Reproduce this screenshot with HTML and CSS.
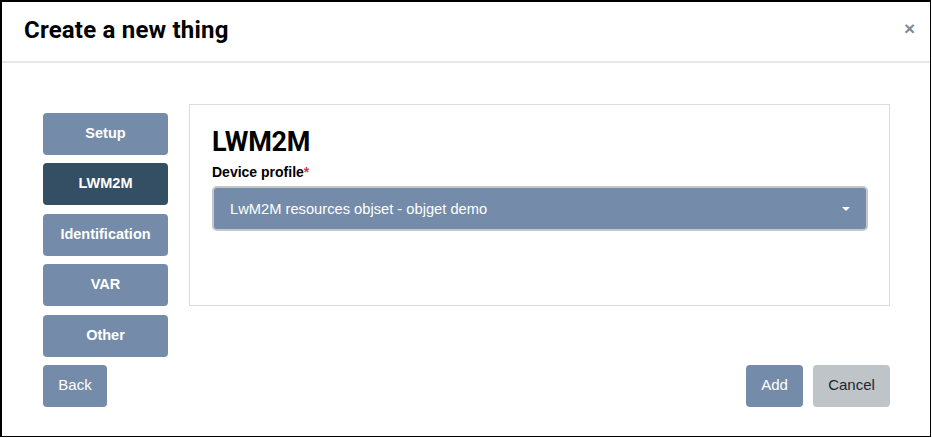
FILE: index.html
```html
<!DOCTYPE html>
<html>
<head>
<meta charset="utf-8">
<link rel="stylesheet" href="styles.css">
</head>
<body>
<div class="modal">
  <div class="modal-header">
    <h1 class="modal-title">Create a new thing</h1>
    <span class="close">&times;</span>
  </div>
  <div class="modal-body">
    <div class="steps">
      <button class="step">Setup</button>
      <button class="step active">LWM2M</button>
      <button class="step">Identification</button>
      <button class="step">VAR</button>
      <button class="step">Other</button>
      <button class="btn btn-primary back">Back</button>
    </div>
    <div class="main">
      <div class="panel">
        <h2 class="panel-title">LWM2M</h2>
        <label class="field-label">Device profile<span class="req">*</span></label>
        <div class="select">
          <span class="select-text">LwM2M resources objset - objget demo</span>
          <span class="caret"></span>
        </div>
      </div>
      <div class="actions">
        <button class="btn btn-primary">Add</button>
        <button class="btn btn-secondary">Cancel</button>
      </div>
    </div>
  </div>
</div>
</body>
</html>
```
FILE: styles.css
```css
* { box-sizing: border-box; }
html, body { margin: 0; padding: 0; background: #fff; }
body { font-family: "Liberation Sans", Arial, sans-serif; }

.modal {
  width: 931px;
  height: 437px;
  border-style: solid;
  border-color: #000;
  border-width: 2px 1px 1px 2px;
  display: flex;
  flex-direction: column;
}

.modal-header {
  height: 61px;
  border-bottom: 2px solid #e4e8ec;
  display: flex;
  align-items: center;
  justify-content: space-between;
  padding: 0 15px 0 22px;
}
.modal-title {
  margin: -4px 0 0 0;
  font-family: Roboto, sans-serif;
  font-weight: 700;
  font-size: 24px;
  letter-spacing: 0.2px;
  color: #000;
}
.close {
  font-family: "Liberation Sans", Arial, sans-serif;
  font-size: 19px;
  font-weight: 700;
  color: #7d8a98;
  line-height: 1;
  margin-top: -7px;
}

.modal-body {
  display: grid;
  grid-template-columns: 125px 701px;
  column-gap: 21px;
  padding: 41px 0 0 41px;
}

.steps {
  display: flex;
  flex-direction: column;
  gap: 8.4px;
  padding-top: 9px;
}
.step {
  height: 42px;
  border: none;
  border-radius: 4px;
  background: #748ca9;
  color: #fff;
  font-family: "Liberation Sans", Arial, sans-serif;
  font-weight: 700;
  font-size: 14.5px;
  padding: 0 0 2px 0;
}
.step.active { background: #344f64; }

.btn {
  height: 42px;
  border: none;
  border-radius: 4px;
  font-family: "Liberation Sans", Arial, sans-serif;
  font-size: 15px;
  padding: 0 12px 2px;
}
.btn-primary { background: #748ca9; color: #fff; }
.btn-secondary { background: #bfc4c8; color: #1c2430; }
.back { width: 64px; align-self: flex-start; }

.main {
  display: flex;
  flex-direction: column;
  justify-content: space-between;
}

.panel {
  height: 202px;
  border: 1px solid #dcdcdc;
  padding: 20px 21px 0 22px;
}
.panel-title {
  margin: 0;
  font-family: Roboto, sans-serif;
  font-weight: 700;
  font-size: 27px;
  letter-spacing: -0.3px;
  line-height: 34px;
  color: #000;
}
.field-label {
  display: block;
  margin-top: 4px;
  font-family: "Liberation Sans", Arial, sans-serif;
  font-weight: 700;
  font-size: 14px;
  color: #000;
  line-height: 18px;
}
.req { color: #e0324a; }

.select {
  margin-top: 5px;
  height: 45px;
  border: 2px solid #c3c7cb;
  border-radius: 5px;
  background: #748ca9;
  display: flex;
  align-items: center;
  justify-content: space-between;
  padding: 0 16px 0 16px;
}
.select-text {
  color: #fff;
  font-size: 14.7px;
}
.caret {
  width: 0;
  height: 0;
  border-left: 4px solid transparent;
  border-right: 4px solid transparent;
  border-top: 4px solid #fff;
}

.actions {
  display: flex;
  justify-content: flex-end;
  gap: 10px;
}
.actions .btn-primary { width: 57px; }
.actions .btn-secondary { width: 77px; }
```
